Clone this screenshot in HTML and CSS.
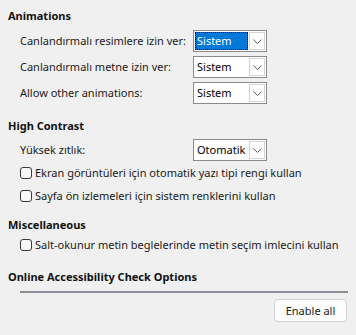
FILE: index.html
```html
<!DOCTYPE html>
<html lang="tr">
<head>
<meta charset="utf-8">
<link rel="stylesheet" href="styles.css">
</head>
<body>
<div class="panel">
  <div class="heading h-first">Animations</div>
  <div class="form-grid">
    <span class="label">Canlandırmalı resimlere izin ver:</span>
    <div class="combo focused"><span class="value">Sistem</span><span class="arrow"><svg width="9" height="5" viewBox="0 0 9 5"><path d="M0.5 0.5 L4.5 4.5 L8.5 0.5" fill="none" stroke="#606060" stroke-width="1"/></svg></span></div>
    <span class="label">Canlandırmalı metne izin ver:</span>
    <div class="combo"><span class="value">Sistem</span><span class="arrow"><svg width="9" height="5" viewBox="0 0 9 5"><path d="M0.5 0.5 L4.5 4.5 L8.5 0.5" fill="none" stroke="#606060" stroke-width="1"/></svg></span></div>
    <span class="label">Allow other animations:</span>
    <div class="combo"><span class="value">Sistem</span><span class="arrow"><svg width="9" height="5" viewBox="0 0 9 5"><path d="M0.5 0.5 L4.5 4.5 L8.5 0.5" fill="none" stroke="#606060" stroke-width="1"/></svg></span></div>
  </div>

  <div class="heading h-contrast">High Contrast</div>
  <div class="form-grid">
    <span class="label">Yüksek zıtlık:</span>
    <div class="combo"><span class="value">Otomatik</span><span class="arrow"><svg width="9" height="5" viewBox="0 0 9 5"><path d="M0.5 0.5 L4.5 4.5 L8.5 0.5" fill="none" stroke="#606060" stroke-width="1"/></svg></span></div>
  </div>
  <label class="check"><span class="box"></span>Ekran görüntüleri için otomatik yazı tipi rengi kullan</label>
  <label class="check"><span class="box"></span>Sayfa ön izlemeleri için sistem renklerini kullan</label>

  <div class="heading h-misc">Miscellaneous</div>
  <label class="check"><span class="box"></span>Salt-okunur metin beglelerinde metin seçim imlecini kullan</label>

  <div class="heading h-online">Online Accessibility Check Options</div>
  <div class="separator"></div>
  <div class="actions"><button class="btn">Enable all</button></div>
</div>
</body>
</html>
```

FILE: styles.css
```css
html, body {
  margin: 0;
  padding: 0;
  background: #f0f0f0;
}
body {
  font-family: "Noto Sans", "DejaVu Sans", sans-serif;
  font-size: 11px;
  color: #1a1a1a;
}
.panel {
  padding: 8px 8px 0 8px;
  width: 340px;
}
.heading {
  font-weight: bold;
  height: 16px;
  line-height: 16px;
  color: #111;
}
.h-first { margin-bottom: 6px; }
.h-contrast { margin-top: 14px; margin-bottom: 5px; }
.h-misc { margin-top: 10px; }
.h-online { margin-top: 13px; }

.form-grid {
  display: grid;
  grid-template-columns: 173px 74px;
  row-gap: 4px;
  padding-left: 12px;
  align-items: center;
}
.label {
  white-space: nowrap;
  line-height: 22px;
}
.combo {
  display: flex;
  height: 22px;
  box-sizing: border-box;
  border: 1px solid #8a8a8a;
  background: #fff;
  padding: 1px;
}
.combo .value {
  flex: 1;
  line-height: 18px;
  padding-left: 2px;
  color: #000;
  white-space: nowrap;
  overflow: hidden;
}
.combo.focused .value {
  background: #0078d7;
  color: #fff;
  outline: 1px dotted #000;
  outline-offset: -1px;
}
.combo .arrow {
  flex: 0 0 auto;
  width: 16px;
  margin-left: 1px;
  box-sizing: border-box;
  border: 1px solid #d4d4d4;
  display: flex;
  align-items: center;
  justify-content: center;
}
.check {
  display: flex;
  align-items: center;
  height: 23px;
  padding-left: 12px;
  white-space: nowrap;
}
.box {
  flex: 0 0 auto;
  width: 12px;
  height: 12px;
  box-sizing: border-box;
  border: 1px solid #3a3a3a;
  border-radius: 3px;
  background: #f9f9f9;
  margin-right: 3px;
}
.separator {
  margin: 6px 0 0 12px;
  height: 2px;
  background: #8b8e94;
}
.actions {
  display: flex;
  justify-content: flex-end;
  margin-top: 6px;
  padding-right: 1px;
}
.btn {
  font-family: inherit;
  font-size: 11px;
  color: #1a1a1a;
  height: 23px;
  width: 73px;
  background: #fdfdfd;
  border: 1px solid #d2d2d2;
  border-radius: 4px;
  padding: 0;
}
```
